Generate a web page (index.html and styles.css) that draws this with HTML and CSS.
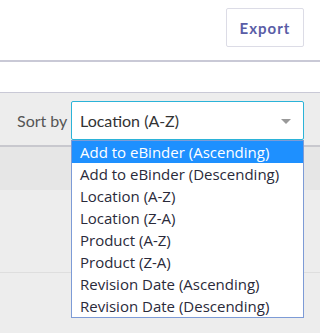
FILE: index.html
```html
<!DOCTYPE html>
<html lang="en">
<head>
  <meta charset="UTF-8">
  <title>Documents</title>
  <meta name="viewport" content="width=device-width, initial-scale=1">
  <link rel="stylesheet" href="styles.css">
</head>
<body>
  <div class="topbar">
    <button class="export-btn">Export</button>
  </div>
  <div class="subbar"></div>

  <div class="toolbar">
    <label class="sort-label">Sort by</label>
    <div class="select">
      <span class="select-value">Location (A-Z)</span>
      <span class="select-arrow"></span>
    </div>
  </div>
  <div class="table-head"></div>
  <div class="table-row"></div>

  <ul class="options">
    <li class="option active">Add to eBinder (Ascending)</li>
    <li class="option">Add to eBinder (Descending)</li>
    <li class="option">Location (A-Z)</li>
    <li class="option">Location (Z-A)</li>
    <li class="option">Product (A-Z)</li>
    <li class="option">Product (Z-A)</li>
    <li class="option">Revision Date (Ascending)</li>
    <li class="option">Revision Date (Descending)</li>
  </ul>
</body>
</html>
```

FILE: styles.css
```css
body {
  margin: 0;
  font-family: Lato, 'Liberation Sans', sans-serif;
  background: #ededed;
  color: #333;
  position: relative;
  min-height: 333px;
}

.topbar {
  height: 62px;
  background: #fff;
  border-bottom: 2px solid #c9c9d6;
  box-shadow: 0 1px 2px rgba(0,0,0,0.08);
  display: flex;
  justify-content: flex-end;
  align-items: flex-start;
  padding: 8px 16px 0 0;
  box-sizing: border-box;
}

.export-btn {
  width: 78px;
  height: 39px;
  background: #fff;
  border: 1px solid #dcdce6;
  border-radius: 2px;
  color: #5a5da6;
  font-family: Lato, sans-serif;
  font-weight: 700;
  font-size: 15px;
  letter-spacing: 1px;
  padding: 0;
}

.subbar {
  height: 30px;
  background: #fff;
  border-bottom: 1px solid #c9c9d6;
}

.toolbar {
  height: 54px;
  display: flex;
  align-items: flex-start;
  padding: 8px 16px 0 17px;
  box-sizing: border-box;
  border-bottom: 2px solid #c8c8ce;
}

.sort-label {
  font-size: 16px;
  color: #555;
  margin-top: 10px;
  width: 54px;
}

.select {
  flex: 1;
  height: 39px;
  box-sizing: border-box;
  background: #fff;
  border: 1px solid #2bb3d8;
  border-radius: 2px;
  display: flex;
  align-items: center;
  justify-content: space-between;
  padding: 0 12px 0 8px;
}

.select-value {
  font-size: 16px;
  color: #333;
}

.select-arrow {
  width: 0;
  height: 0;
  border-left: 5px solid transparent;
  border-right: 5px solid transparent;
  border-top: 5px solid #999;
  margin-top: 2px;
}

.table-head {
  height: 43px;
  background: #e6e6e6;
}

.table-row {
  height: 82px;
  border-bottom: 1px solid #dedede;
}

.options {
  position: absolute;
  top: 140px;
  left: 71px;
  width: 233px;
  margin: 0;
  padding: 0;
  list-style: none;
  background: #fff;
  border: 1px solid #7d9bd6;
  box-sizing: border-box;
}

.option {
  height: 22px;
  line-height: 22px;
  padding-left: 8px;
  font-family: 'Open Sans', 'Noto Sans', sans-serif;
  font-size: 15px;
  color: #2a2a3a;
  white-space: nowrap;
}

.option.active {
  background: #1e90ff;
  color: #fff;
}
```
